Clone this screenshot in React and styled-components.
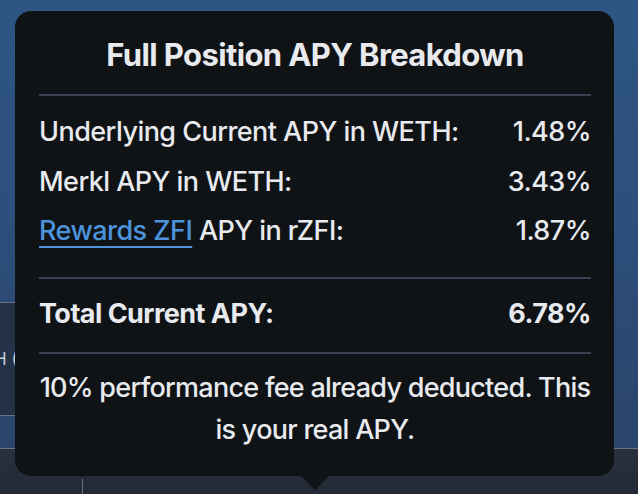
import React from "react";
import styled, { createGlobalStyle } from "styled-components";

const GlobalStyle = createGlobalStyle`
  html, body { margin: 0; padding: 0; }
  body { background: #26303d; font-family: Inter, "Noto Sans", sans-serif; }
`;

const Page = styled.div`
  position: relative;
  width: 638px;
  height: 494px;
  overflow: hidden;
  background: linear-gradient(180deg, #2e5584 0%, #2c4f7c 45%, #2b4870 75%, #2a4266 100%);
  display: flex;
  flex-direction: column;
`;

const BackRows = styled.div`
  display: flex;
  flex-direction: column;
  width: 300px;
`;

const BackRow = styled.div`
  height: ${(p) => p.$h}px;
  box-sizing: border-box;
  border-top: ${(p) => (p.$line ? "1px solid #6a7484" : "none")};
  background: ${(p) => p.$bg || "transparent"};
  display: flex;
  align-items: center;
  overflow: hidden;
`;

const BackText = styled.span`
  margin-left: -6px;
  color: #c9ced6;
  font-size: 17px;
  white-space: nowrap;
`;

const Footer = styled.div`
  flex: 1;
  border-top: 1px solid #6a7484;
  background: linear-gradient(180deg, #27303c 0%, #222a35 100%);
  display: flex;
`;

const FooterCell = styled.div`
  width: 82px;
  border-right: 1px solid #6a7484;
  margin-top: 30px;
`;

const Tooltip = styled.div`
  position: absolute;
  left: 15px;
  top: 11px;
  width: 599px;
  height: 465px;
  box-sizing: border-box;
  background: #0f1316;
  border-radius: 16px;
  padding: 24px 23px 0 24px;
  color: #e8eaee;
  display: flex;
  flex-direction: column;

  &::after {
    content: "";
    position: absolute;
    left: 286px;
    bottom: -14px;
    border-left: 14px solid transparent;
    border-right: 14px solid transparent;
    border-top: 14px solid #0f1316;
  }
`;

const Title = styled.div`
  font-size: 31px;
  font-weight: 700;
  line-height: 40px;
  letter-spacing: -0.02em;
  text-align: center;
  padding-bottom: 19px;
  border-bottom: 2px solid #3a4152;
`;

const Rows = styled.div`
  display: flex;
  flex-direction: column;
  padding: 11px 0 21px;
  border-bottom: 2px solid #3a4152;
`;

const Row = styled.div`
  display: flex;
  justify-content: space-between;
  align-items: baseline;
  font-size: 27px;
  font-weight: ${(p) => (p.$bold ? 700 : 500)};
  line-height: 49.5px;
  letter-spacing: -0.02em;
`;

const Link = styled.a`
  color: #4d93dc;
  text-decoration: underline;
  text-decoration-thickness: 2px;
  text-underline-offset: 6px;
`;

const TotalBlock = styled.div`
  padding: 10px 0 14px;
  border-bottom: 2px solid #3a4152;
`;

const Note = styled.p`
  margin: 0 -6px;
  padding-top: 13px;
  font-size: 27px;
  font-weight: 500;
  line-height: 42px;
  letter-spacing: -0.027em;
  text-align: center;
`;

export default function App() {
  return (
    <>
      <GlobalStyle />
      <Page>
        <BackRows>
          <BackRow $h={302} />
          <BackRow $h={113} $line $bg="#233247">
            <BackText>H (</BackText>
          </BackRow>
          <BackRow $h={33} $line />
        </BackRows>
        <Footer>
          <FooterCell />
        </Footer>
        <Tooltip>
          <Title>Full Position APY Breakdown</Title>
          <Rows>
            <Row>
              <span>Underlying Current APY in WETH:</span>
              <span>1.48%</span>
            </Row>
            <Row>
              <span>Merkl APY in WETH:</span>
              <span>3.43%</span>
            </Row>
            <Row>
              <span>
                <Link>Rewards ZFI</Link> APY in rZFI:
              </span>
              <span>1.87%</span>
            </Row>
          </Rows>
          <TotalBlock>
            <Row $bold>
              <span>Total Current APY:</span>
              <span>6.78%</span>
            </Row>
          </TotalBlock>
          <Note>
            10% performance fee already deducted. This is your real APY.
          </Note>
        </Tooltip>
      </Page>
    </>
  );
}
